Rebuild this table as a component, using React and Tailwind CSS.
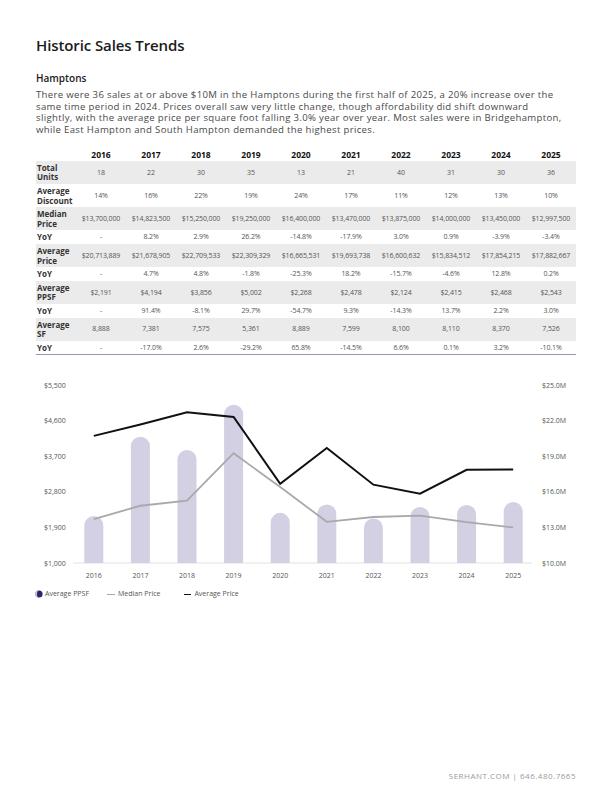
import React from 'react';

const years = ['2016', '2017', '2018', '2019', '2020', '2021', '2022', '2023', '2024', '2025'];

const rows = [
  { label: ['Total', 'Units'], shade: true, vals: ['18', '22', '30', '35', '13', '21', '40', '31', '30', '36'] },
  { label: ['Average', 'Discount'], vals: ['14%', '16%', '22%', '19%', '24%', '17%', '11%', '12%', '13%', '10%'] },
  { label: ['Median', 'Price'], shade: true, vals: ['$13,700,000', '$14,823,500', '$15,250,000', '$19,250,000', '$16,400,000', '$13,470,000', '$13,875,000', '$14,000,000', '$13,450,000', '$12,997,500'] },
  { label: ['YoY'], vals: ['-', '8.2%', '2.9%', '26.2%', '-14.8%', '-17.9%', '3.0%', '0.9%', '-3.9%', '-3.4%'] },
  { label: ['Average', 'Price'], shade: true, vals: ['$20,713,889', '$21,678,905', '$22,709,533', '$22,309,329', '$16,665,531', '$19,693,738', '$16,600,632', '$15,834,512', '$17,854,215', '$17,882,667'] },
  { label: ['YoY'], vals: ['-', '4.7%', '4.8%', '-1.8%', '-25.3%', '18.2%', '-15.7%', '-4.6%', '12.8%', '0.2%'] },
  { label: ['Average', 'PPSF'], shade: true, vals: ['$2,191', '$4,194', '$3,856', '$5,002', '$2,268', '$2,478', '$2,124', '$2,415', '$2,468', '$2,543'] },
  { label: ['YoY'], vals: ['-', '91.4%', '-8.1%', '29.7%', '-54.7%', '9.3%', '-14.3%', '13.7%', '2.2%', '3.0%'] },
  { label: ['Average', 'SF'], shade: true, vals: ['8,888', '7,381', '7,575', '5,361', '8,889', '7,599', '8,100', '8,110', '8,370', '7,526'] },
  { label: ['YoY'], vals: ['-', '-17.0%', '2.6%', '-29.2%', '65.8%', '-14.5%', '6.6%', '0.1%', '3.2%', '-10.1%'] },
];

// chart data
const ppsf = [2191, 4194, 3856, 5002, 2268, 2478, 2124, 2415, 2468, 2543];
const median = [13.7, 14.8235, 15.25, 19.25, 16.4, 13.47, 13.875, 14.0, 13.45, 12.9975];
const avg = [20.714, 21.679, 22.71, 22.309, 16.666, 19.694, 16.601, 15.835, 17.854, 17.883];

const base = 564;
const top = 386;
const xAt = (i) => 93.8 + i * 46.6;
const yLeft = (v) => base - ((v - 1000) / 4500) * (base - top);
const yRight = (v) => base - ((v - 10) / 15) * (base - top);

const leftTicks = ['$1,000', '$1,900', '$2,800', '$3,700', '$4,600', '$5,500'];
const rightTicks = ['$10.0M', '$13.0M', '$16.0M', '$19.0M', '$22.0M', '$25.0M'];

function barPath(cx, y) {
  const w = 19;
  const r = w / 2;
  const x = cx - r;
  return `M${x} ${base} V${y + r} A${r} ${r} 0 0 1 ${x + w} ${y + r} V${base} Z`;
}

function Chart() {
  const tickY = (i) => base - i * ((base - top) / 5);
  return (
    <svg width="540" height="208" viewBox="36 378 540 208" className="block" style={{ fontFamily: "'Open Sans', sans-serif" }}>
      <line x1="73" y1={base} x2="532" y2={base} stroke="#e2e2e2" strokeWidth="1" />
      {ppsf.map((v, i) => (
        <path key={i} d={barPath(xAt(i), yLeft(v))} fill="#d2d0e2" />
      ))}
      <polyline
        points={median.map((v, i) => `${xAt(i)},${yRight(v)}`).join(' ')}
        fill="none"
        stroke="#a9a9a9"
        strokeWidth="1.8"
      />
      <polyline
        points={avg.map((v, i) => `${xAt(i)},${yRight(v)}`).join(' ')}
        fill="none"
        stroke="#111"
        strokeWidth="2"
      />
      {leftTicks.map((t, i) => (
        <text key={t} x="44" y={tickY(i) + 2.5} fontSize="7" fill="#555">{t}</text>
      ))}
      {rightTicks.map((t, i) => (
        <text key={t} x="542" y={tickY(i) + 2.5} fontSize="7" fill="#555">{t}</text>
      ))}
      {years.map((y, i) => (
        <text key={y} x={xAt(i)} y="578.5" fontSize="7" fill="#555" textAnchor="middle">{y}</text>
      ))}
    </svg>
  );
}

export default function App() {
  return (
    <div className="w-[612px] h-[792px] bg-white flex flex-col px-[36px] font-['Open_Sans',sans-serif] text-[#222]">
      <h1 className="pt-[35px] text-[15px] leading-[20px] font-semibold tracking-[-0.1px] text-[#1b1b1b]">
        Historic Sales Trends
      </h1>

      <h2 className="mt-[17px] text-[10px] leading-[12px] font-semibold text-[#1b1b1b]">Hamptons</h2>
      <p className="mt-[5px] text-[9.6px] leading-[11.7px] tracking-[0.33px] text-[#4a4a4a] whitespace-nowrap">
        There were 36 sales at or above $10M in the Hamptons during the first half of 2025, a 20% increase over the<br />
        same time period in 2024. Prices overall saw very little change, though affordability did shift downward<br />
        slightly, with the average price per square foot falling 3.0% year over year. Most sales were in Bridgehampton,<br />
        while East Hampton and South Hampton demanded the highest prices.
      </p>

      {/* table */}
      <div className="mt-[13px] border-b-[1.5px] border-[#9896b4]">
        <div className="grid grid-cols-[40px_repeat(10,1fr)] h-[12px] items-center">
          <div />
          {years.map((y) => (
            <div key={y} className="text-center text-[8.5px] leading-[10px] font-bold text-[#111]">{y}</div>
          ))}
        </div>
        {rows.map((r, i) => (
          <div
            key={i}
            className={`grid grid-cols-[40px_repeat(10,1fr)] items-center py-[2px] ${r.shade ? 'bg-[#ebebeb]' : ''}`}
          >
            <div className="pl-[1px] text-[8px] leading-[9.6px] font-bold text-[#333]">
              {r.label.map((l) => (
                <div key={l}>{l}</div>
              ))}
            </div>
            {r.vals.map((v, j) => (
              <div key={j} className="text-center text-[7px] leading-[9.6px] text-[#555] tracking-[-0.1px]">{v}</div>
            ))}
          </div>
        ))}
      </div>

      <div className="mt-[22px]">
        <Chart />
      </div>

      <div className="flex items-center h-[12px] mt-[3px] text-[7px] text-[#555]">
        <svg width="8" height="8" viewBox="0 0 8 8" className="ml-[-1px]">
          <circle cx="4" cy="4" r="3.6" fill="#2b2766" />
          <path d="M4 0.4 A3.6 3.6 0 0 0 4 7.6 A2 3.6 0 0 1 4 0.4 Z" fill="#cfcde2" />
        </svg>
        <span className="ml-[2px]">Average PPSF</span>
        <span className="ml-[18px] w-[8px] h-[1.5px] bg-[#a9a9a9]" />
        <span className="ml-[3px]">Median Price</span>
        <span className="ml-[24px] w-[7px] h-[1.5px] bg-[#111]" />
        <span className="ml-[3px]">Average Price</span>
      </div>

      <div className="mt-auto pb-[11px] text-right text-[8px] leading-[10px] font-medium tracking-[0.5px] text-[#9a9a9a]">
        SERHANT.COM | 646.480.7665
      </div>
    </div>
  );
}
